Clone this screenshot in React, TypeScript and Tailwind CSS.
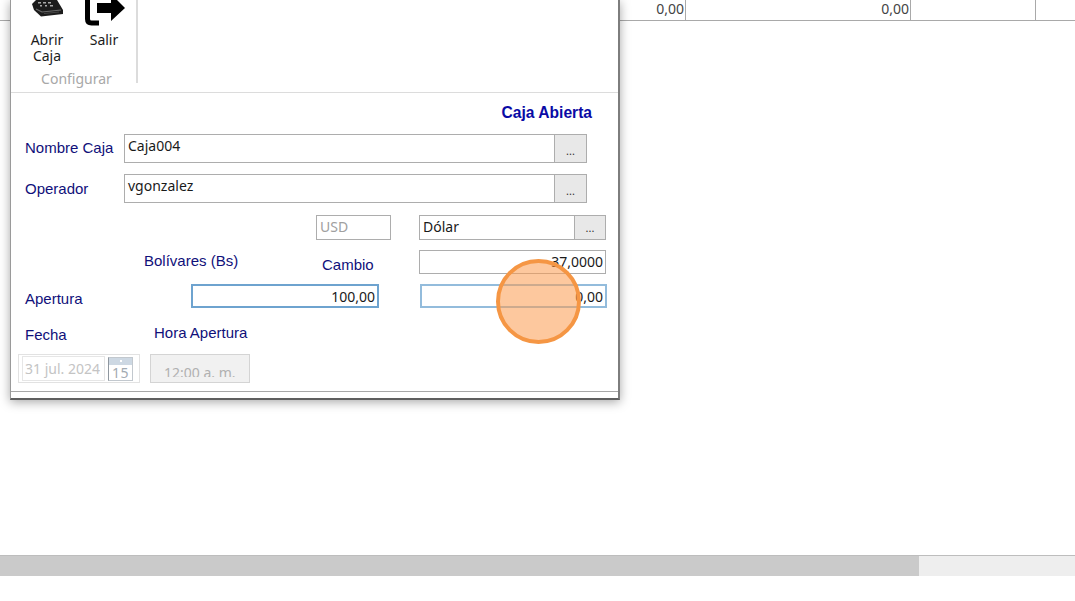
const uiFont = "font-['Noto_Sans',sans-serif]";
const labelFont = "font-['Liberation_Sans',Arial,sans-serif] text-[15px] leading-[18px] text-[#10107a]";

function DrawerIcon() {
  return (
    <svg width="32" height="17" viewBox="0 0 32 17" className="block">
      <path d="M0 4 L4 0 H25 L31 10 V14 L9 16.5 L2 10 Z" fill="#1c1c1c" />
      <path d="M6 2 h3 v1.5 h-3z M11 2 h3 v1.5 h-3z M16 2 h3 v1.5 h-3z M8 5 h2 v1.5 h-2z M13 5 h2 v1.5 h-2z M18 5 h3 v1.5 h-3z" fill="#a8a8a8" />
      <path d="M4 9 L10 12 L29 10" stroke="#6a6a6a" strokeWidth="1.2" fill="none" />
      <path d="M12 13.5 L27 12" stroke="#444" strokeWidth="1" fill="none" />
    </svg>
  );
}

function ExitIcon() {
  return (
    <svg width="40" height="26" viewBox="0 0 40 26" className="block">
      <path d="M2.5 0 V19 Q2.5 23 6.5 23 H14" stroke="#000" strokeWidth="5" fill="none" />
      <path d="M12 3 H26 V-6 L40 8 L26 21 V13 H12 Z" fill="#000" />
    </svg>
  );
}

function CalendarIcon() {
  return (
    <div className="flex h-[24px] w-[25px] flex-col border border-[#c2c8ce] border-l-[#8f979f] bg-white">
      <div className="flex h-[7px] items-center justify-center bg-[#cdd8e3]">
        <div className="h-[2px] w-[2px] bg-white" />
      </div>
      <div className={`flex-1 text-center text-[14px] leading-[15px] tracking-[0.5px] text-[#a2aab2] ${uiFont}`}>15</div>
    </div>
  );
}

function Field({ w, h, value, right, focus, muted }: { w: string; h: string; value?: string; right?: boolean; focus?: string; muted?: boolean }) {
  return (
    <div
      className={`${w} ${h} shrink-0 overflow-hidden border bg-white pl-[3px] pr-[2px] text-[14px] leading-[22px] ${uiFont} ${focus ?? 'border-[#adadad]'} ${right ? 'text-right' : ''} ${muted ? 'text-[#a0a0a0]' : 'text-[#1a1a1a]'}`}
    >
      {value}
    </div>
  );
}

function DotsButton({ w, h }: { w: string; h: string }) {
  return (
    <div className={`${w} ${h} -ml-px flex shrink-0 items-end justify-center border border-[#adadad] bg-[#e8e8e8] pb-[5px] text-[11px] leading-[12px] text-[#333] ${uiFont}`}>
      ...
    </div>
  );
}

function Ribbon() {
  return (
    <div className={`h-[93px] shrink-0 border-b border-[#dcdcdc] ${uiFont}`}>
      <div className="flex h-[83px] w-[127px] flex-col border-r-2 border-[#dcdcdc]">
        <div className="flex h-[74px] text-[14px] leading-[16px] text-[#1c1c1c]">
          <div className="ml-[14px] flex w-[44px] flex-col items-center">
            <div className="flex h-[32px] w-full justify-center pl-[2px]">
              <DrawerIcon />
            </div>
            <span className="text-center">Abrir Caja</span>
          </div>
          <div className="ml-[15px] flex w-[40px] flex-col items-center">
            <div className="ml-[1px] h-[32px]">
              <ExitIcon />
            </div>
            <span>Salir</span>
          </div>
        </div>
        <div className="pl-[6px] text-center text-[14px] leading-[9px] text-[#a8a8a8]">Configurar</div>
      </div>
    </div>
  );
}

function CashForm() {
  return (
    <div className="flex flex-col">
      <div className="mt-[11px] flex h-[18px] justify-end pr-[26px]">
        <span className="font-['Liberation_Sans',Arial,sans-serif] text-[15.6px] font-bold leading-[18px] text-[#0a0aa5]">Caja Abierta</span>
      </div>

      <div className="mt-[12px] flex h-[29px] pl-[14px]">
        <div className={`w-[99px] pt-[5px] ${labelFont}`}>Nombre Caja</div>
        <Field w="w-[431px]" h="h-[29px]" value="Caja004" />
        <DotsButton w="w-[33px]" h="h-[29px]" />
      </div>

      <div className="mt-[11px] flex h-[29px] pl-[14px]">
        <div className={`w-[99px] pt-[6px] ${labelFont}`}>Operador</div>
        <Field w="w-[431px]" h="h-[29px]" value="vgonzalez" />
        <DotsButton w="w-[33px]" h="h-[29px]" />
      </div>

      <div className="mt-[12px] flex h-[25px] pl-[305px]">
        <Field w="w-[75px]" h="h-[25px]" value="USD" muted />
        <div className="w-[28px]" />
        <Field w="w-[156px]" h="h-[25px]" value="Dólar" />
        <DotsButton w="w-[32px]" h="h-[25px]" />
      </div>

      <div className="mt-[10px] flex h-[24px] pl-[133px]">
        <div className={`w-[178px] pt-[2px] ${labelFont}`}>Bolívares (Bs)</div>
        <div className={`w-[97px] pt-[6px] ${labelFont}`}>Cambio</div>
        <Field w="w-[187px]" h="h-[24px]" value="37,0000" right />
      </div>

      <div className="mt-[10px] flex h-[24px] pl-[14px]">
        <div className={`w-[166px] pt-[6px] ${labelFont}`}>Apertura</div>
        <Field w="w-[188px]" h="h-[24px]" value="100,00" right focus="border-2 border-[#6ea3cf]" />
        <div className="w-[41px]" />
        <Field w="w-[187px]" h="h-[24px]" value="0,00" right focus="border-2 border-[#93bcdc]" />
      </div>

      <div className="mt-[16px] flex h-[20px] pl-[14px]">
        <div className={`w-[129px] pt-[2px] ${labelFont}`}>Fecha</div>
        <div className={labelFont}>Hora Apertura</div>
      </div>

      <div className="mt-[10px] flex h-[29px] pl-[7px]">
        <div className="flex h-[29px] w-[122px] items-center border border-[#e2e2e2] pl-[3px]">
          <div className="h-[25px] w-[83px] overflow-hidden border border-[#e6e6e6] pl-[2px] text-[14px] leading-[24px] text-[#c4c4c4]">
            <span className={uiFont}>31 jul. 2024</span>
          </div>
          <div className="ml-[3px]">
            <CalendarIcon />
          </div>
        </div>
        <div className="ml-[10px] h-[29px] w-[100px] border border-[#d4d4d4] bg-[#f1f1f1] pl-[13px] pt-[8px]">
          <div className={`h-[14px] overflow-hidden text-[14px] leading-[19px] text-[#b0b0b0] ${uiFont}`}>12:00 a. m.</div>
        </div>
      </div>

      <div className="mt-[8px] border-t border-[#a8a8a8]" />
    </div>
  );
}

export default function App() {
  return (
    <div className="relative flex h-[601px] w-[1075px] flex-col overflow-hidden bg-white">
      {/* grid behind the dialog */}
      <div className={`flex h-[21px] shrink-0 border-b border-[#a9a9a9] text-[14px] leading-[17px] text-[#444] ${uiFont}`}>
        <div className="w-[686px] border-r border-[#a9a9a9] pr-px text-right">0,00</div>
        <div className="w-[225px] border-r border-[#a9a9a9] pr-px text-right">0,00</div>
        <div className="w-[125px] border-r border-[#a9a9a9]" />
      </div>

      <div className="flex-1" />

      {/* horizontal scrollbar */}
      <div className="mb-[25px] flex h-[21px] shrink-0 border-t border-[#bdbdbd] bg-[#eeeeee]">
        <div className="w-[919px] bg-[#cacaca]" />
      </div>

      {/* dialog */}
      <div className="absolute left-[10px] top-0 flex h-[400px] w-[610px] flex-col border-b-2 border-l border-r-2 border-b-[#5f5f5f] border-l-[#9a9a9a] border-r-[#7d7d7d] bg-white shadow-[0_2px_10px_rgba(0,0,0,0.35)]">
        <Ribbon />
        <CashForm />
      </div>

      {/* click marker */}
      <div className="absolute left-[496px] top-[259px] h-[85px] w-[85px] rounded-full border-4 border-[#f59644] bg-[#fb9a4f]/55" />
    </div>
  );
}
